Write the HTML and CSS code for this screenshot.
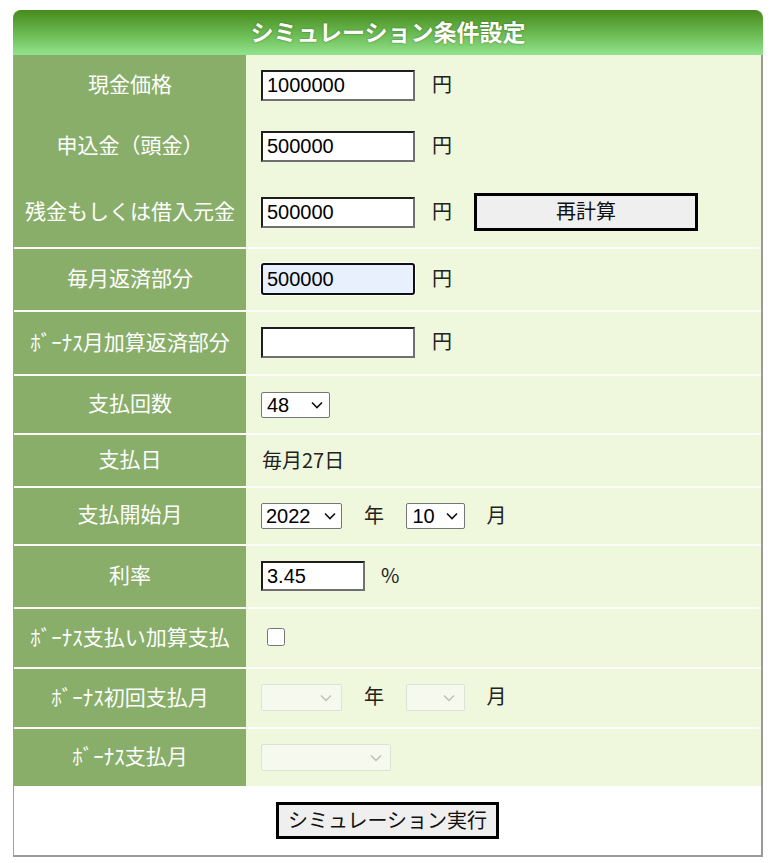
FILE: index.html
```html
<!DOCTYPE html>
<html lang="ja">
<head>
 <meta charset="UTF-8" />
 <title>シミュレーション条件設定</title>
 <link rel="stylesheet" href="styles.css">
</head>
<body>
 <div class="panel">
   <div class="panel-title">シミュレーション条件設定</div>
   <div class="panel-body">
     <table class="form-table">
       <tr class="no-line">
         <th>現金価格</th>
         <td><input type="text" class="money" value="1000000"><span class="unit">円</span></td>
       </tr>
       <tr class="no-line">
         <th>申込金（頭金）</th>
         <td><input type="text" class="money" value="500000"><span class="unit">円</span></td>
       </tr>
       <tr class="no-line tall">
         <th>残金もしくは借入元金</th>
         <td><input type="text" class="money" value="500000"><span class="unit">円</span><button class="recalc">再計算</button></td>
       </tr>
       <tr class="slim">
         <th>毎月返済部分</th>
         <td><input type="text" class="money focused" value="500000"><span class="unit">円</span></td>
       </tr>
       <tr class="roomy">
         <th>ﾎﾞｰﾅｽ月加算返済部分</th>
         <td><input type="text" class="money" value=""><span class="unit">円</span></td>
       </tr>
       <tr>
         <th>支払回数</th>
         <td>
           <select class="sel-count">
             <option>12</option><option>24</option><option>36</option>
             <option selected>48</option><option>60</option>
           </select>
         </td>
       </tr>
       <tr>
         <th>支払日</th>
         <td class="plain">毎月27日</td>
       </tr>
       <tr>
         <th>支払開始月</th>
         <td>
           <select class="sel-year"><option>2022</option><option>2023</option></select><span class="unit">年</span>
           <select class="sel-month"><option>9</option><option selected>10</option><option>11</option></select><span class="unit">月</span>
         </td>
       </tr>
       <tr class="roomy">
         <th>利率</th>
         <td><input type="text" class="rate" value="3.45"><span class="unit">%</span></td>
       </tr>
       <tr class="roomy">
         <th>ﾎﾞｰﾅｽ支払い加算支払</th>
         <td><input type="checkbox" class="check"></td>
       </tr>
       <tr class="roomy">
         <th>ﾎﾞｰﾅｽ初回支払月</th>
         <td>
           <select class="sel-year" disabled><option></option></select><span class="unit">年</span>
           <select class="sel-month" disabled><option></option></select><span class="unit">月</span>
         </td>
       </tr>
       <tr>
         <th>ﾎﾞｰﾅｽ支払月</th>
         <td><select class="sel-bonus" disabled><option></option></select></td>
       </tr>
     </table>
     <div class="actions">
       <button class="run">シミュレーション実行</button>
     </div>
   </div>
 </div>
</body>
</html>
```

FILE: styles.css
```css
body {
  margin: 0;
  background: #fff;
  font-family: "Noto Sans CJK JP", "Liberation Sans", sans-serif;
  color: #222;
}

.panel {
  width: 750px;
  margin: 10px 0 0 13px;
}

.panel-title {
  height: 45px;
  line-height: 43px;
  text-align: center;
  color: #fff;
  font-size: 23px;
  font-weight: bold;
  border-radius: 8px 8px 0 0;
  background: linear-gradient(to bottom, #478a1b 0%, #6cbc55 55%, #93e38e 100%);
  text-shadow: 0 0 2px rgba(40, 80, 20, 0.7);
}

.panel-body {
  border-left: 1px solid #a0a0a0;
  border-right: 2px solid #9a9a9a;
  border-bottom: 2px solid #9a9a9a;
}

.form-table {
  width: 100%;
  border-collapse: collapse;
}

.form-table tr {
  border-top: 2px solid #fbfdf6;
}

.form-table tr.no-line {
  border-top: none;
}

.form-table th {
  width: 232px;
  background: #89ae6a;
  color: #fff;
  font-size: 21px;
  font-weight: normal;
  text-align: center;
  padding: 0 0 5px;
}

.form-table td {
  background: #eff7dd;
  padding: 15px 0 15px 15px;
  font-size: 20px;
  line-height: 21px;
  vertical-align: middle;
}

.form-table tr.tall td {
  padding: 16px 0 16px 15px;
}

.form-table tr.slim td {
  padding: 14px 0 15px 15px;
}

.form-table tr.roomy td {
  padding: 15px 0 16px 15px;
}

.form-table td.plain {
  padding: 14px 0 16px 16px;
}

.unit {
  display: inline-block;
  vertical-align: middle;
  font-size: 20px;
  padding-bottom: 4px;
}

input.money,
input.rate {
  box-sizing: border-box;
  height: 31px;
  padding: 0 4px;
  margin: 0;
  font-family: "Liberation Sans", sans-serif;
  font-size: 20px;
  color: #000;
  background: #fff;
  border-style: solid;
  border-width: 2px;
  border-color: #1e1e1e #707070 #707070 #1e1e1e;
  vertical-align: middle;
}

input.money {
  width: 154px;
}

input.money + .unit {
  margin-left: 17px;
}

input.rate {
  width: 104px;
  height: 30px;
}

input.rate + .unit {
  margin-left: 16px;
}

input.focused {
  background: #e8f0fe;
  border: 2px solid #111;
  border-radius: 3px;
  box-shadow: 0 0 0 1px #fff;
  height: 32px;
}

button {
  font-family: "Noto Sans CJK JP", sans-serif;
  font-size: 20px;
  color: #111;
  background: #efefef;
  border: 3px solid #000;
  cursor: pointer;
  padding: 0 0 3px;
}

.recalc {
  width: 224px;
  height: 38px;
  margin-left: 22px;
  vertical-align: middle;
}

select {
  box-sizing: border-box;
  appearance: none;
  -webkit-appearance: none;
  height: 26px;
  font-family: "Liberation Sans", sans-serif;
  font-size: 20px;
  color: #000;
  background: #fff url("data:image/svg+xml,%3Csvg xmlns='http://www.w3.org/2000/svg' width='12' height='8' viewBox='0 0 12 8'%3E%3Cpath d='M1 1.5l5 5 5-5' fill='none' stroke='%23111' stroke-width='1.6'/%3E%3C/svg%3E") no-repeat right 8px center;
  border: 1px solid #767676;
  border-radius: 2px;
  padding: 0 0 0 5px;
  margin: 0;
  vertical-align: middle;
}

select:disabled {
  background-color: #fafbf5;
  background-image: url("data:image/svg+xml,%3Csvg xmlns='http://www.w3.org/2000/svg' width='12' height='8' viewBox='0 0 12 8'%3E%3Cpath d='M1 1.5l5 5 5-5' fill='none' stroke='%23a8a8a8' stroke-width='1.4'/%3E%3C/svg%3E");
  border-color: #d8dad2;
  height: 27px;
}

.sel-count {
  width: 69px;
  background-position: right 6px center;
}

.sel-year {
  width: 81px;
  padding-left: 4px;
  background-position: right 5px center;
}

.sel-month {
  width: 59px;
  background-position: right 6px center;
}

.sel-bonus {
  width: 130px;
}

.sel-year:disabled,
.sel-month:disabled {
  background-position: right 9px center;
}

.sel-year + .unit {
  margin: 0 18px 0 22px;
}

.sel-month + .unit {
  margin-left: 21px;
}

.check {
  width: 18px;
  height: 18px;
  margin: 4px 0 5px 6px;
  vertical-align: middle;
}

.actions {
  background: #fff;
  text-align: center;
  padding: 16px 0 16px;
}

.run {
  width: 223px;
  height: 37px;
}
```
